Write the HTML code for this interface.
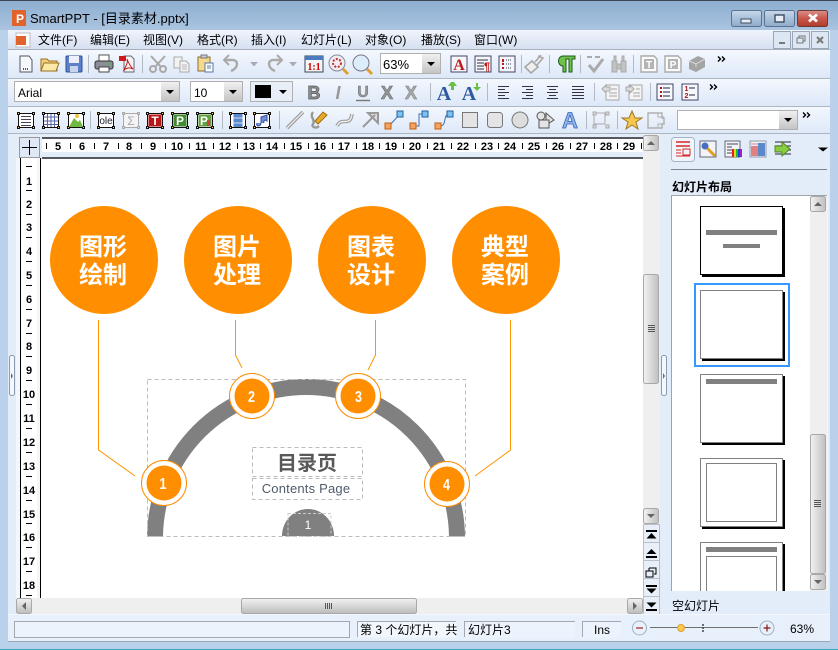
<!DOCTYPE html>
<html><head><meta charset="utf-8"><style>
html,body{margin:0;padding:0;width:838px;height:650px;overflow:hidden;background:#b9d1ea}
svg{display:block}
text{font-family:"Liberation Sans","Noto Sans CJK SC",sans-serif;fill:#000}
.m{font-size:12px}
.r text,.r{font-size:11px;text-anchor:middle;font-weight:bold}
.w text{fill:#fff;font-weight:bold;font-size:24px;text-anchor:middle}
.n{fill:#fff;font-weight:bold;font-size:16px;text-anchor:middle}
</style></head><body>
<svg width="838" height="650" viewBox="0 0 838 650" xmlns="http://www.w3.org/2000/svg">
<defs>
<clipPath id="arcclip"><rect x="140" y="370" width="340" height="166.500"/></clipPath>
<linearGradient id="tb" x1="0" y1="0" x2="0" y2="1"><stop offset="0" stop-color="#8dadcf"/><stop offset="1" stop-color="#aac4e0"/></linearGradient>
<linearGradient id="mn" x1="0" y1="0" x2="0" y2="1"><stop offset="0" stop-color="#f0f4fc"/><stop offset="1" stop-color="#d6e0f1"/></linearGradient>
<linearGradient id="tl" x1="0" y1="0" x2="0" y2="1"><stop offset="0" stop-color="#f4f8fe"/><stop offset="1" stop-color="#dde8f8"/></linearGradient>
<linearGradient id="btn" x1="0" y1="0" x2="0" y2="1"><stop offset="0" stop-color="#c8d8ea"/><stop offset=".5" stop-color="#a9c0da"/><stop offset="1" stop-color="#8fabc9"/></linearGradient>
<linearGradient id="red" x1="0" y1="0" x2="0" y2="1"><stop offset="0" stop-color="#dc9088"/><stop offset=".5" stop-color="#c8584a"/><stop offset="1" stop-color="#b03a2c"/></linearGradient>
<linearGradient id="dd" x1="0" y1="0" x2="0" y2="1"><stop offset="0" stop-color="#f0f0f0"/><stop offset="1" stop-color="#c4c4c4"/></linearGradient>
<linearGradient id="sv" x1="0" y1="0" x2="1" y2="0"><stop offset="0" stop-color="#f2f2f2"/><stop offset="1" stop-color="#c0c0c0"/></linearGradient>
<linearGradient id="sh" x1="0" y1="0" x2="0" y2="1"><stop offset="0" stop-color="#f2f2f2"/><stop offset="1" stop-color="#bcbcbc"/></linearGradient>
<g id="fr"><rect x="-7.500" y="-6.500" width="15" height="14" fill="#fff" stroke="#111"/><g fill="#fc6" stroke="#111"><rect x="-8.500" y="-7.500" width="2" height="2"/><rect x="6.500" y="-7.500" width="2" height="2"/><rect x="-8.500" y="6.500" width="2" height="2"/><rect x="6.500" y="6.500" width="2" height="2"/></g></g>
<g id="frg"><rect x="-7.500" y="-6.500" width="15" height="14" fill="#f4f4f4" stroke="#aaa"/><g fill="#ddd" stroke="#aaa"><rect x="-8.500" y="-7.500" width="2" height="2"/><rect x="6.500" y="-7.500" width="2" height="2"/><rect x="-8.500" y="6.500" width="2" height="2"/><rect x="6.500" y="6.500" width="2" height="2"/></g></g>
<path id="arr" d="M-4-2H4L0 2Z" fill="#000"/>
<path id="garr" d="M-4-2H4L0 2.500Z" fill="#aab"/>
<g id="ra"><path d="M-4-2.500l2.500 2.500-2.500 2.500M0-2.500l2.500 2.500-2.500 2.500" fill="none" stroke="#000" stroke-width="1.400"/></g>
<g id="up"><rect x=".5" y=".5" width="15" height="15" rx="2" fill="url(#sv)" stroke="#a8a8a8"/><path d="M4 10h8l-4-4z" fill="#666"/></g>
<g id="dn"><rect x=".5" y=".5" width="15" height="15" rx="2" fill="url(#sv)" stroke="#a8a8a8"/><path d="M4 6h8l-4 4z" fill="#666"/></g>
<g id="gr"><path d="M0 .5h7M0 2.500h7M0 4.500h7M0 6.500h7" stroke="#555" stroke-width="1"/></g>
<g id="c1"><circle r="22.500" fill="#fff" stroke="#ff8c00"/><circle r="17.500" fill="#ff8e00"/></g>
</defs>

<!-- frame -->
<rect width="838" height="650" fill="#b9d1ea"/>
<rect width="838" height="30" fill="url(#tb)"/>
<path d="M0 .5H838" stroke="#3a4654"/>
<rect x="8" y="30" width="822" height="611" fill="#e3edfa"/>
<path d="M8 641.500H830" stroke="#9aa6b4"/><path d="M0 649.500H838" stroke="#1aa0b8" stroke-opacity=".8"/>

<!-- title -->
<rect x="12" y="10" width="14" height="16" fill="#e2622c"/>
<text x="16" y="23" style="font-size:12px;font-weight:bold;fill:#fff">P</text>
<text x="30" y="23" style="font-size:13px;fill:#000">SmartPPT - [目录素材.pptx]</text>
<rect x="731.500" y="10.500" width="30" height="16" rx="2" fill="url(#btn)" stroke="#5a7290"/><rect x="741" y="19" width="10" height="4" fill="#e8eef6" stroke="#3c4c60"/>
<rect x="764.500" y="10.500" width="30" height="16" rx="2" fill="url(#btn)" stroke="#5a7290"/><rect x="775" y="15" width="9" height="7" fill="#e8eef6" stroke="#3c4c60" stroke-width="1.400"/>
<rect x="797.500" y="10.500" width="30" height="16" rx="2" fill="url(#red)" stroke="#6a3a34"/><path d="M809 14.500l8 7M817 14.500l-8 7" stroke="#fff" stroke-width="2.800"/>

<!-- menu -->
<rect x="8" y="30" width="822" height="19" fill="url(#mn)"/>
<path d="M8 49.500H830" stroke="#a9b1bc"/>
<rect x="16" y="33" width="14" height="14" fill="#fff" stroke="#bbb"/><rect x="16" y="36" width="10" height="9" fill="#e2622c"/>
<g class="m">
<text x="38" y="44">文件(F)</text><text x="90" y="44">编辑(E)</text><text x="143" y="44">视图(V)</text><text x="197" y="44">格式(R)</text><text x="251" y="44">插入(I)</text><text x="301" y="44">幻灯片(L)</text><text x="365" y="44">对象(O)</text><text x="421" y="44">播放(S)</text><text x="474" y="44">窗口(W)</text>
</g>
<g fill="#dde6f3" stroke="#9aa6b6"><rect x="773.500" y="31.500" width="17" height="17"/><rect x="792.500" y="31.500" width="17" height="17"/><rect x="811.500" y="31.500" width="17" height="17"/></g>
<path d="M779 43h6" stroke="#777" stroke-width="2"/><path d="M797 38h6v5h-6zM799 38v-2h6v5h-2" fill="none" stroke="#777"/><path d="M817 37l6 6M823 37l-6 6" stroke="#777" stroke-width="2"/>

<!-- toolbars bg -->
<rect x="8" y="50" width="822" height="28" fill="url(#tl)"/>
<rect x="8" y="78" width="822" height="28" fill="url(#tl)"/>
<rect x="8" y="106" width="822" height="28" fill="url(#tl)"/>
<path d="M8 78.500H830M8 106.500H830M8 133.500H830" stroke="#aeb6c2"/>
<g stroke="#b4bac4"><path d="M88.500 55v18M142.500 55v18M549.500 55v18M580.500 55v18M633.500 55v18M521.500 55v18"/><path d="M430.500 83v18M487.500 83v18M594.500 83v18M650.500 83v18"/><path d="M90.500 111v18M222.500 111v18M279.500 111v18M586.500 111v18M617.500 111v18"/></g>

<!-- row 1 icons -->
<g transform="translate(26,64)"><path d="M-6-8H3L6-4V8H-6Z" fill="#f6f8fc" stroke="#556"/><path d="M-3 5h6" stroke="#556" stroke-dasharray="1 1" stroke-width="2"/></g>
<g transform="translate(50,64)"><path d="M-9-5h6l2 2H7V7H-9Z" fill="#f2cf7a" stroke="#9a7020"/><path d="M-9 7l3-8H9L6 7Z" fill="#fbe9a8" stroke="#9a7020"/></g>
<g transform="translate(74,64)"><rect x="-8" y="-8" width="16" height="16" rx="1" fill="#5b7fc8" stroke="#2f4f96"/><rect x="-5" y="-8" width="10" height="7" fill="#eef"/><rect x="-4" y="2" width="8" height="6" fill="#c8d4ec"/></g>
<g transform="translate(104,64)"><rect x="-5" y="-9" width="10" height="6" fill="#fff" stroke="#555"/><rect x="-9" y="-3" width="18" height="8" rx="2" fill="#8a8f96" stroke="#333"/><rect x="-5" y="3" width="10" height="5" fill="#fff" stroke="#444"/><circle cx="5" cy="0" r="1" fill="#3c3"/></g>
<g transform="translate(127,64)"><path d="M-3-8H4L7-5V8H-3Z" fill="#f4f4f4" stroke="#667"/><rect x="-8" y="-8" width="7" height="5" fill="#d01818"/><path d="M-3 6C0 0 1-2 0-5 2 0 4 3 6 5 2 3 0 4-3 6Z" fill="none" stroke="#c81818"/></g>
<g transform="translate(158,64)" fill="none" stroke="#a8a8a8" stroke-width="2"><circle cx="-5" cy="5" r="3"/><circle cx="5" cy="5" r="3"/><path d="M-7-8L3 3M7-8L-3 3"/></g>
<g transform="translate(182,64)" fill="#f2f2f2" stroke="#aaa"><path d="M-8-7H0V4H-8Z"/><path d="M-2-3H4L7 0V8H-2Z"/><path d="M0 1h5M0 3h5M0 5h5" stroke="#bbb"/></g>
<g transform="translate(206,64)"><rect x="-8" y="-7" width="12" height="14" fill="#f5d98c" stroke="#8a7030"/><rect x="-5" y="-9" width="6" height="3" fill="#ccc" stroke="#777"/><rect x="-1" y="-1" width="8" height="9" fill="#fff" stroke="#5577aa"/><path d="M1 2h4M1 4h4" stroke="#5577aa"/></g>
<g transform="translate(233,64)" fill="none" stroke="#aaa" stroke-width="2.400"><path d="M-2 7C6 4 6-5-2-4H-8"/><path d="M-4-9L-9-4-4 1" stroke-width="2"/></g><use href="#garr" x="254" y="64"/>
<g transform="translate(273,64)" fill="none" stroke="#aaa" stroke-width="2.400"><path d="M2 7C-6 4-6-5 2-4H8"/><path d="M4-9L9-4 4 1" stroke-width="2"/></g><use href="#garr" x="293" y="64"/>
<g transform="translate(314,64)"><rect x="-9" y="-8" width="18" height="16" fill="#f6f6f6" stroke="#345"/><rect x="-9" y="-8" width="18" height="4" fill="#4a7ac0"/><text x="0" y="6" style="font-size:10px;font-weight:bold;fill:#c00;text-anchor:middle;font-family:'Liberation Serif',serif">1:1</text></g>
<g transform="translate(338,64)"><path d="M5 5L10 10" stroke="#e0a030" stroke-width="3"/><circle cx="-1" cy="-1" r="8" fill="#f0eef2" stroke="#889"/><circle cx="-1" cy="-1" r="4" fill="none" stroke="#c83030" stroke-width="2" stroke-dasharray="2 1.500"/></g>
<g transform="translate(362,64)"><path d="M5 5L10 10" stroke="#e0a030" stroke-width="3"/><circle cx="-1" cy="-1" r="8" fill="#dceefa" stroke="#778"/></g>
<rect x="380.500" y="53.500" width="60" height="20" fill="#fff" stroke="#b0b0b0"/><rect x="422" y="54" width="18" height="19" fill="url(#dd)"/><use href="#arr" x="431" y="64"/>
<text x="383" y="69" style="font-size:13px">63%</text>
<g transform="translate(459,64)"><rect x="-8" y="-8" width="16" height="16" fill="#f4f6fa" stroke="#446"/><text x="0" y="6" style="font-size:16px;font-weight:bold;fill:#c01818;text-anchor:middle;font-family:'Liberation Serif',serif">A</text></g>
<g transform="translate(483,64)"><rect x="-8" y="-8" width="16" height="16" fill="#f4f6fa" stroke="#446"/><path d="M-6-4H5M-6-1H1M-6 2H1M-6 5H1" stroke="#334"/><text x="4" y="6" style="font-size:11px;font-weight:bold;fill:#c01818;text-anchor:middle">¶</text></g>
<g transform="translate(507,64)"><rect x="-8" y="-8" width="16" height="16" fill="#f4f6fa" stroke="#446"/><path d="M-1-4H5M-1 0H5M-1 4H5" stroke="#345" stroke-dasharray="1 1"/><rect x="-5" y="-5" width="2" height="3" fill="#c01818"/><rect x="-5" y="-1" width="2" height="2" fill="#c01818"/><rect x="-5" y="3" width="2" height="2" fill="#c01818"/></g>
<g transform="translate(534,64)" fill="#eee" stroke="#a8a8a8" stroke-width="1.600"><path d="M1-2L7-9M4-8L9-6 3 1"/><path d="M-2-3L4 3-3 9-9 3Z"/></g>
<g transform="translate(566,64)"><path d="M9-8H-3C-9-8-9 2-3 2V8H0V-5H3V8H6V-5H9Z" fill="#6fc14a" stroke="#1d5a1d"/></g>
<g transform="translate(595,64)" fill="none" stroke="#aaa" stroke-width="3"><path d="M-6 1L-1 7 8-5"/><path d="M-8-7h5M0-7h5" stroke-width="2"/></g>
<g transform="translate(619,64)" fill="#c2c2c2" stroke="#aaa"><rect x="-7" y="-3" width="5" height="11"/><rect x="2" y="-3" width="5" height="11"/><rect x="-5" y="-8" width="2" height="5"/><rect x="3" y="-8" width="2" height="5"/><rect x="-2" y="0" width="4" height="5"/></g>
<g transform="translate(649,64)"><path d="M-8-8H5L8-5V8H-8Z" fill="#fafafa" stroke="#aaa" stroke-width="1.400"/><rect x="-5" y="-5" width="10" height="10" fill="#b4b4b4"/><text x="0" y="4" style="font-size:10px;font-weight:bold;fill:#fff;text-anchor:middle">T</text></g>
<g transform="translate(673,64)"><path d="M-8-8H5L8-5V8H-8Z" fill="#fafafa" stroke="#aaa" stroke-width="1.400"/><rect x="-5" y="-5" width="10" height="10" fill="#b4b4b4"/><text x="0" y="4" style="font-size:10px;font-weight:bold;fill:#fff;text-anchor:middle">P</text></g>
<g transform="translate(697,64)"><path d="M-8-3L1-8 8-5V3L-1 8-8 5Z" fill="#a4a4a4"/><path d="M-8-3L-1 0 8-5M-1 0V3" stroke="#ddd" fill="none"/></g>
<use href="#ra" x="722" y="59"/>

<!-- row 2 -->
<rect x="14.500" y="81.500" width="165" height="20" fill="#fff" stroke="#b0b0b0"/><rect x="161" y="82" width="18" height="19" fill="url(#dd)"/><use href="#arr" x="170" y="92"/>
<text x="18" y="97" style="font-size:12px">Arial</text>
<rect x="190.500" y="81.500" width="52" height="20" fill="#fff" stroke="#b0b0b0"/><rect x="224" y="82" width="18" height="19" fill="url(#dd)"/><use href="#arr" x="233" y="92"/>
<text x="194" y="97" style="font-size:12px">10</text>
<rect x="250.500" y="81.500" width="42" height="20" fill="#e8eef8" stroke="#b0b0b0"/><rect x="255" y="85" width="16" height="13" fill="#000"/><use href="#arr" x="283" y="92"/>
<g style="font-weight:bold;text-anchor:middle">
<text x="314" y="99" style="font-size:18px;fill:#909090;stroke:#555;stroke-width:.7">B</text>
<text x="338" y="99" style="font-size:18px;fill:#999;font-style:italic;font-weight:bold">I</text>
<text x="363" y="97" style="font-size:16px;fill:#999;stroke:#666;stroke-width:.4">U</text>
<text x="387" y="99" style="font-size:18px;fill:#999;stroke:#666;stroke-width:.6">X</text>
<text x="411" y="99" style="font-size:18px;fill:#aaa;stroke:#777;stroke-width:.5">X</text></g>
<path d="M356 100.500h14" stroke="#777" stroke-width="1.400"/>
<g style="font-size:20px;font-weight:bold;text-anchor:middle;font-family:'Liberation Serif',serif"><text x="444" y="100" style="fill:#2c5aa0;font-family:'Liberation Serif',serif">A</text><text x="469" y="100" style="fill:#2c5aa0;font-family:'Liberation Serif',serif">A</text></g>
<path d="M451 90V86H448L451 82 454 82 457 86H454V90Z" fill="#6cc04a"/><path d="M476 83V87H473L477 91 481 87H478V83Z" fill="#6cc04a"/>
<g stroke="#334" fill="none"><path d="M498 86.500H509M498 89.500H505M498 92.500H509M498 95.500H505M498 98.500H509"/><path d="M522 86.500H533M526 89.500H533M522 92.500H533M526 95.500H533M522 98.500H533"/><path d="M547 86.500H558M549 89.500H556M547 92.500H558M549 95.500H556M547 98.500H558"/><path d="M572 86.500H584M572 89.500H584M572 92.500H584M572 95.500H584M572 98.500H584"/></g>
<g transform="translate(611,92)" fill="#f4f4f4" stroke="#a8a8a8"><rect x="-5" y="-7" width="13" height="15"/><path d="M-9-3L-5-7V-5H-1V-1H-5V1Z" fill="#ddd"/><path d="M0 -3H6M-2 1H6M-2 4H6"/></g>
<g transform="translate(635,92)" fill="#f4f4f4" stroke="#a8a8a8"><rect x="-6" y="-7" width="13" height="15"/><path d="M-9-5H-5V-7L-1-3-5 1V-1H-9Z" fill="#ddd"/><path d="M1-3H5M-2 1H5M-2 4H5"/></g>
<g transform="translate(665,92)"><rect x="-8" y="-8" width="16" height="16" fill="#f6f8fc" stroke="#446"/><path d="M-2-4H5M-2 0H5M-2 4H5" stroke="#224"/><g fill="#a01818"><rect x="-5" y="-5" width="2" height="2"/><rect x="-5" y="-1" width="2" height="2"/><rect x="-5" y="3" width="2" height="2"/></g></g>
<g transform="translate(690,92)"><rect x="-8" y="-8" width="16" height="16" fill="#f6f8fc" stroke="#446"/><path d="M-1-4H5M-1 3H5" stroke="#224"/><text x="-3.500" y="-1" style="font-size:7px;font-weight:bold;fill:#a01818;text-anchor:middle">1</text><text x="-3.500" y="6" style="font-size:7px;font-weight:bold;fill:#a01818;text-anchor:middle">2</text></g>
<use href="#ra" x="714" y="87"/>

<!-- row 3 -->
<g transform="translate(26,120)"><use href="#fr"/><path d="M-5-3.500H5M-5-.5H5M-5 2.500H5M-5 5.500H5" stroke="#445"/></g>
<g transform="translate(51,120)"><use href="#fr"/><path d="M-7-3H7M-7 1H7M-7 4.500H7M-3.500-6V7M0-6V7M3.500-6V7" stroke="#5566aa"/></g>
<g transform="translate(76,120)"><use href="#fr"/><path d="M-7 7L-2-2 2 2 4 0 7 7Z" fill="#70b840"/><circle cx="1" cy="-4" r="2" fill="#f0c040"/></g>
<g transform="translate(106,120)"><use href="#fr"/><text x="0" y="4" style="font-size:10px;text-anchor:middle;fill:#223">ole</text></g>
<g transform="translate(131,120)"><use href="#frg"/><text x="0" y="5" style="font-size:12px;text-anchor:middle;fill:#aaa">Σ</text></g>
<g transform="translate(155,120)"><use href="#fr"/><rect x="-6.500" y="-5.500" width="13" height="12" fill="#b81818"/><text x="0" y="5" style="font-size:12px;font-weight:bold;text-anchor:middle;fill:#fff">T</text></g>
<g transform="translate(180,120)"><use href="#fr"/><rect x="-6.500" y="-5.500" width="13" height="12" fill="#408a30"/><text x="0" y="5" style="font-size:12px;font-weight:bold;text-anchor:middle;fill:#fff">P</text></g>
<g transform="translate(205,120)"><use href="#fr"/><rect x="-6.500" y="-5.500" width="13" height="12" fill="#60a040"/><text x="-1" y="5" style="font-size:12px;font-weight:bold;text-anchor:middle;fill:#fff">P</text><rect x="2" y="0" width="3" height="6" fill="#d04040"/></g>
<g transform="translate(238,120)"><use href="#fr"/><rect x="-4.500" y="-6" width="9" height="13" fill="#5588cc"/><path d="M-4.500-2H4.500M-4.500 3H4.500" stroke="#dde"/></g>
<g transform="translate(262,120)"><use href="#fr"/><path d="M-5 3C-7 7-1 7-1 3V-3L5-5V1C3-1 1 1 2 3" fill="#7090d8" stroke="#3050a0"/></g>
<path d="M287 128L303 112" stroke="#999" stroke-width="3.600"/><path d="M287 128L303 112" stroke="#e8e8e8" stroke-width="1.400"/>
<g transform="translate(319,120)"><path d="M-6-8C-10-3-3 0-6 4-8 7-3 9 0 6" fill="none" stroke="#999" stroke-width="2.400"/><path d="M-1 4L8-5 4-8-4 1Z" fill="#e8a828" stroke="#a07010"/></g>
<path d="M337 126C342 116 350 128 352 114" fill="none" stroke="#999" stroke-width="3.600"/><path d="M337 126C342 116 350 128 352 114" fill="none" stroke="#eee" stroke-width="1.400"/>
<path d="M363 127L375 115M368 113H378V123Z" fill="#ddd" stroke="#999" stroke-width="2"/>
<g transform="translate(394,120)"><path d="M-5 6L6-6" stroke="#4070b0"/><rect x="-9" y="3" width="6" height="6" fill="#f4a460" stroke="#c06010"/><rect x="3" y="-9" width="6" height="6" fill="#7ec0ee" stroke="#2060a0"/></g>
<g transform="translate(419,120)"><path d="M-4 6H0V-6H5" fill="none" stroke="#4070b0"/><rect x="-9" y="3" width="6" height="6" fill="#f4a460" stroke="#c06010"/><rect x="3" y="-9" width="6" height="6" fill="#7ec0ee" stroke="#2060a0"/></g>
<g transform="translate(444,120)"><path d="M-4 6C3 6-1-6 5-6" fill="none" stroke="#4070b0"/><rect x="-9" y="3" width="6" height="6" fill="#f4a460" stroke="#c06010"/><rect x="3" y="-9" width="6" height="6" fill="#7ec0ee" stroke="#2060a0"/></g>
<rect x="462.500" y="112.500" width="15" height="15" fill="#e4e4e4" stroke="#777"/>
<rect x="487.500" y="112.500" width="15" height="15" rx="3" fill="#e4e4e4" stroke="#777"/>
<circle cx="520" cy="120" r="8" fill="#ddd" stroke="#777"/>
<g transform="translate(545,120)" fill="#e4e4e4" stroke="#555"><circle cx="-4" cy="-4" r="4"/><path d="M1-7L9 0 1 5Z"/><rect x="-6" y="0" width="10" height="8"/></g>
<text x="570" y="128" style="font-size:22px;font-weight:bold;text-anchor:middle;fill:#8fb4ea;stroke:#3a66b8;stroke-width:.8">A</text>
<g transform="translate(601,120)" fill="#ddd" stroke="#aaa"><rect x="-7" y="-7" width="11" height="11" fill="none"/><rect x="-8" y="-8" width="3" height="3"/><rect x="5" y="-8" width="3" height="3"/><rect x="-8" y="5" width="3" height="3"/><rect x="5" y="5" width="3" height="3"/></g>
<path d="M632 111L635 118H642L636 122 638 129 632 125 626 129 628 122 622 118H629Z" fill="#f6c850" stroke="#a07820"/>
<g transform="translate(656,120)" fill="none" stroke="#b0b0b0" stroke-width="1.400"><path d="M-8-7H6V-2H8V4H6V8H-8Z"/><path d="M2-7V-3H8M2 8V4H8" stroke-width="1"/></g>
<rect x="677.500" y="110.500" width="120" height="19" fill="#fff" stroke="#b0b0b0"/><rect x="779" y="111" width="18" height="18" fill="url(#dd)"/><use href="#arr" x="788" y="120"/>
<use href="#ra" x="807" y="115"/>

<!-- ruler h -->
<rect x="41" y="137" width="602" height="21" fill="#e3edfa"/><rect x="42" y="139" width="601" height="13" fill="#fff"/>
<path d="M42 138H643M42 158H643" stroke="#000" stroke-width="1.200"/>
<rect x="19.500" y="137.500" width="20" height="20" fill="#dfe8f4" stroke="#999"/><path d="M22 147.500H37M29.500 140V155" stroke="#000"/>
<g class="r">
<text x="58" y="150">5</text><text x="82" y="150">6</text><text x="106" y="150">7</text><text x="129" y="150">8</text><text x="153" y="150">9</text><text x="177" y="150">10</text><text x="201" y="150">11</text><text x="225" y="150">12</text><text x="249" y="150">13</text><text x="272" y="150">14</text><text x="296" y="150">15</text><text x="320" y="150">16</text><text x="344" y="150">17</text><text x="368" y="150">18</text><text x="391" y="150">19</text><text x="415" y="150">20</text><text x="439" y="150">21</text><text x="463" y="150">22</text><text x="487" y="150">23</text><text x="510" y="150">24</text><text x="534" y="150">25</text><text x="558" y="150">26</text><text x="582" y="150">27</text><text x="606" y="150">28</text><text x="629" y="150">29</text>
</g>
<path d="M46.500 143v6M70.500 143v6M94.500 143v6M118.500 143v6M141.500 143v6M165.500 143v6M189.500 143v6M213.500 143v6M237.500 143v6M260.500 143v6M284.500 143v6M308.500 143v6M332.500 143v6M356.500 143v6M379.500 143v6M403.500 143v6M427.500 143v6M451.500 143v6M475.500 143v6M498.500 143v6M522.500 143v6M546.500 143v6M570.500 143v6M594.500 143v6M617.500 143v6M641.500 143v6" stroke="#000"/>

<!-- ruler v -->
<rect x="16" y="158" width="25" height="440" fill="#f2f7fd"/>
<rect x="21" y="158" width="16" height="440" fill="#fff"/>
<path d="M20.500 158V598M40.500 158V598" stroke="#000"/>
<g class="r">
<text x="29" y="185">1</text><text x="29" y="208">2</text><text x="29" y="231">3</text><text x="29" y="255">4</text><text x="29" y="279">5</text><text x="29" y="303">6</text><text x="29" y="327">7</text><text x="29" y="350">8</text><text x="29" y="374">9</text><text x="29" y="398">10</text><text x="29" y="422">11</text><text x="29" y="446">12</text><text x="29" y="470">13</text><text x="29" y="494">14</text><text x="29" y="518">15</text><text x="29" y="541">16</text><text x="29" y="565">17</text><text x="29" y="589">18</text>
</g>
<path d="M26 166.500h6M26 190.500h6M26 214.500h6M26 237.500h6M26 261.500h6M26 285.500h6M26 309.500h6M26 333.500h6M26 356.500h6M26 380.500h6M26 404.500h6M26 428.500h6M26 452.500h6M26 476.500h6M26 500.500h6M26 523.500h6M26 547.500h6M26 571.500h6M26 595.500h6" stroke="#000"/>

<!-- canvas -->
<rect x="41" y="159" width="602" height="439" fill="#fff"/>
<g fill="none" stroke="#ff9500"><path d="M98.500 320V450L135 476"/><path d="M235.500 320V355L242 368"/><path d="M375.500 320V355L368 370"/><path d="M510.500 320V450L475 476"/></g>
<g fill="#ff8e00"><circle cx="104" cy="260" r="54"/><circle cx="238" cy="260" r="54"/><circle cx="372" cy="260" r="54"/><circle cx="506" cy="260" r="54"/></g>
<g class="w">
<text x="103" y="255">图形</text><text x="103" y="283">绘制</text>
<text x="237" y="255">图片</text><text x="237" y="283">处理</text>
<text x="371" y="255">图表</text><text x="371" y="283">设计</text>
<text x="505" y="255">典型</text><text x="505" y="283">案例</text>
</g>
<path d="M155 538A151 151 0 0 1 457 538" fill="none" stroke="#808080" stroke-width="16" clip-path="url(#arcclip)"/>
<path d="M282 536A26 27 0 0 1 334 536Z" fill="#808080"/>
<g fill="none" stroke="#bbb" stroke-dasharray="4 3"><rect x="147.500" y="379.500" width="318" height="157"/><rect x="252.500" y="447.500" width="110" height="29"/><rect x="252.500" y="478.500" width="110" height="21"/><rect x="288" y="513.500" width="43" height="23" stroke="#ccc" stroke-dasharray="3 2"/></g>
<text x="307" y="470" style="font-size:20px;font-weight:bold;text-anchor:middle;fill:#595959">目录页</text>
<text x="306" y="493" style="font-size:13px;text-anchor:middle;fill:#4f5b6b;letter-spacing:.2px">Contents Page</text>
<text x="308" y="529" style="font-size:12px;text-anchor:middle;fill:#fff">1</text>
<use href="#c1" x="164" y="483"/><use href="#c1" x="252" y="396"/><use href="#c1" x="358" y="396"/><use href="#c1" x="447" y="484"/>
<text x="163" y="489" class="n" textLength="7" lengthAdjust="spacingAndGlyphs">1</text><text x="251.500" y="402" class="n" textLength="7" lengthAdjust="spacingAndGlyphs">2</text><text x="358.500" y="402" class="n" textLength="7" lengthAdjust="spacingAndGlyphs">3</text><text x="446.500" y="490" class="n" textLength="7" lengthAdjust="spacingAndGlyphs">4</text>

<!-- main v scrollbar -->
<rect x="643" y="134" width="17" height="390" fill="#efefef"/>
<use href="#up" x="643" y="135"/>
<rect x="643.500" y="274.500" width="15" height="109" rx="2" fill="url(#sv)" stroke="#a8a8a8"/><use href="#gr" x="648" y="325"/>
<use href="#dn" x="643" y="508"/>
<g fill="#e8eff9" stroke="#b8c0cc"><rect x="643.500" y="524.500" width="16" height="18"/><rect x="643.500" y="542.500" width="16" height="18"/><rect x="643.500" y="560.500" width="16" height="18"/><rect x="643.500" y="578.500" width="16" height="18"/><rect x="643.500" y="596.500" width="16" height="18"/></g>
<path d="M646 530h11v2h-11zM651.500 533L656.500 538.500H646.500Z" fill="#000"/>
<path d="M651.500 549L656.500 554H646.500ZM646 556h11v2h-11z" fill="#000"/>
<path d="M646 571h7v6h-7zM649 568h7v6h-2M649 568v3" fill="none" stroke="#000"/>
<path d="M646 585h11v2h-11zM646.500 588.500H656.500L651.500 593.500Z" fill="#000"/>

<!-- h scrollbar -->
<rect x="16" y="598" width="627" height="16" fill="#efefef"/>
<g><rect x="16.500" y="598.500" width="15" height="15" rx="2" fill="url(#sh)" stroke="#a8a8a8"/><path d="M26 602v8l-4-4z" fill="#666"/></g>
<rect x="241.500" y="598.500" width="175" height="15" rx="2" fill="url(#sh)" stroke="#a8a8a8"/><path d="M325.500 603v6M327.500 603v6M329.500 603v6M331.500 603v6" stroke="#555"/>
<g><rect x="627.500" y="598.500" width="15" height="15" rx="2" fill="url(#sh)" stroke="#a8a8a8"/><path d="M633 602v8l4-4z" fill="#666"/></g>

<!-- grips -->
<rect x="9.500" y="355.500" width="5" height="40" rx="2" fill="#f4f8fd" stroke="#8a9ab0"/><path d="M11 373v6l2-3z" fill="#667"/>
<rect x="661.500" y="355.500" width="5" height="40" rx="2" fill="#f4f8fd" stroke="#8a9ab0"/><path d="M663 373v6l2-3z" fill="#667"/>

<!-- right panel -->
<rect x="671.500" y="137.500" width="23" height="24" rx="3" fill="#f0f5fc" stroke="#a4b4c8"/>
<g transform="translate(683,149)"><path d="M-7-7H7M-7-3H7" stroke="#d82828" stroke-width="1.600"/><path d="M-7 1H-2M-7 4H-2M-7 7H7" stroke="#d82828"/><rect x="0" y="0" width="7" height="6" fill="none" stroke="#d82828"/></g>
<g transform="translate(708,149)"><rect x="-8" y="-8" width="16" height="16" fill="#f2f4f8" stroke="#667"/><path d="M-3-3L7 7" stroke="#e0a020" stroke-width="3"/><circle cx="-3" cy="-3" r="3.500" fill="#4a6ec0"/></g>
<g transform="translate(733,149)"><rect x="-8" y="-8" width="15" height="16" fill="#f2f4f8" stroke="#667"/><path d="M-6-5H5M-6-2H-1M-6 1H-1M-6 4H-1" stroke="#445"/><g><rect x="-1" y="0" width="2" height="8" fill="#e02020"/><rect x="1" y="0" width="2" height="8" fill="#f0d020"/><rect x="3" y="0" width="2" height="8" fill="#20c020"/><rect x="5" y="0" width="2" height="8" fill="#2040e0"/><rect x="7" y="0" width="2" height="8" fill="#a020c0"/></g></g>
<g transform="translate(758,149)"><rect x="-8" y="-8" width="16" height="16" fill="#e8f0f8" stroke="#99a"/><rect x="-7" y="-3" width="7" height="10" fill="#e08080"/><rect x="0" y="-6" width="7" height="13" fill="#5a88c8"/><path d="M-7-5H0" stroke="#d88"/></g>
<g transform="translate(783,149)"><path d="M-8-7H8M-8-3H8M-8 1H8M-8 5H8" stroke="#667" stroke-width="1.600"/><path d="M-8-3H-1V-7L7 0-1 7V3H-8Z" fill="#88cc44" stroke="#558822"/></g>
<path d="M818 147.500h10l-5 4z" fill="#000"/>
<path d="M671 169.500H827" stroke="#7a8494"/>
<text x="672" y="191" style="font-size:12px;font-weight:bold">幻灯片布局</text>
<rect x="671.500" y="195.500" width="156" height="396" fill="#fff"/>
<path d="M671.500 592V195.500H827" fill="none" stroke="#a0a4aa"/>
<rect x="810" y="196" width="17" height="395" fill="#efefef"/>
<use href="#up" x="810" y="196"/>
<rect x="810.500" y="434.500" width="15" height="139" rx="2" fill="url(#sv)" stroke="#a8a8a8"/><use href="#gr" x="814" y="500"/>
<use href="#dn" x="810" y="574"/>

<!-- thumbs -->
<g>
<rect x="702" y="208" width="83" height="69" fill="#000"/><rect x="700.500" y="206.500" width="82" height="68" fill="#fff" stroke="#000"/>
<rect x="706" y="230" width="71" height="5" fill="#808080"/><rect x="723" y="244" width="37" height="4" fill="#808080"/>
<rect x="695" y="284" width="94" height="82" fill="none" stroke="#3399ff" stroke-width="2"/>
<rect x="702" y="292" width="83" height="69" fill="#000"/><rect x="700.500" y="290.500" width="82" height="68" fill="#fff" stroke="#808080"/>
<rect x="702" y="376" width="83" height="69" fill="#000"/><rect x="700.500" y="374.500" width="82" height="68" fill="#fff" stroke="#808080"/>
<rect x="706" y="379" width="71" height="5" fill="#808080"/>
<rect x="702" y="460" width="83" height="69" fill="#000"/><rect x="700.500" y="458.500" width="82" height="68" fill="#fff" stroke="#808080"/>
<rect x="706.500" y="463.500" width="70" height="58" fill="none" stroke="#808080"/>
<rect x="702" y="544" width="83" height="47" fill="#000"/><rect x="700.500" y="542.500" width="82" height="60" fill="#fff" stroke="#808080"/>
<rect x="706" y="547" width="71" height="5" fill="#808080"/><rect x="706.500" y="556.500" width="70" height="50" fill="none" stroke="#808080"/>
</g>
<rect x="664" y="591" width="166" height="29" fill="#e3edfa"/>
<rect x="643.500" y="596.500" width="16" height="18" fill="#e8eff9" stroke="#b8c0cc"/>
<path d="M646.500 602.500H656.500L651.500 607.500ZM646 609h11v2h-11z" fill="#000"/>
<text x="672" y="610" style="font-size:12px">空幻灯片</text>

<!-- status -->
<rect x="8" y="615" width="822" height="26" fill="#e8f0fb"/>
<path d="M8 614.500H830" stroke="#f4f8fe"/>
<g fill="#edf3fc" stroke="#a4a8ae"><rect x="14.500" y="621.500" width="335" height="16"/></g>
<rect x="357.500" y="621.500" width="99" height="16" fill="#f2f6fd"/><path d="M357.500 637V621.500H456" fill="none" stroke="#a4a8ae"/>
<text x="360" y="634" style="font-size:12px">第 3 个幻灯片，共</text>
<rect x="464.500" y="621.500" width="110" height="16" fill="#edf3fc"/><path d="M464.500 637V621.500H575" fill="none" stroke="#a4a8ae"/>
<text x="468" y="634" style="font-size:12px">幻灯片3</text>
<rect x="582.500" y="621.500" width="38" height="16" fill="#edf3fc"/><path d="M582.500 637V621.500H621" fill="none" stroke="#a4a8ae"/>
<text x="594" y="634" style="font-size:12px">Ins</text>
<path d="M650 627.500H758" stroke="#707070"/>
<circle cx="639.500" cy="628" r="7" fill="#e8f0fa" stroke="#9ab0c8"/><path d="M636 628h7" stroke="#a02020" stroke-width="1.200"/>
<circle cx="767" cy="628" r="7" fill="#e8f0fa" stroke="#9ab0c8"/><path d="M763.500 628h7M767 624.500v7" stroke="#801818" stroke-width="1.200"/>
<circle cx="681" cy="628" r="3.500" fill="#f8c850" stroke="#e0a030"/>
<path d="M703 624v8" stroke="#444" stroke-width="1.500" stroke-dasharray="2 1"/>
<text x="790" y="633" style="font-size:12px">63%</text>
</svg>
</body></html>
